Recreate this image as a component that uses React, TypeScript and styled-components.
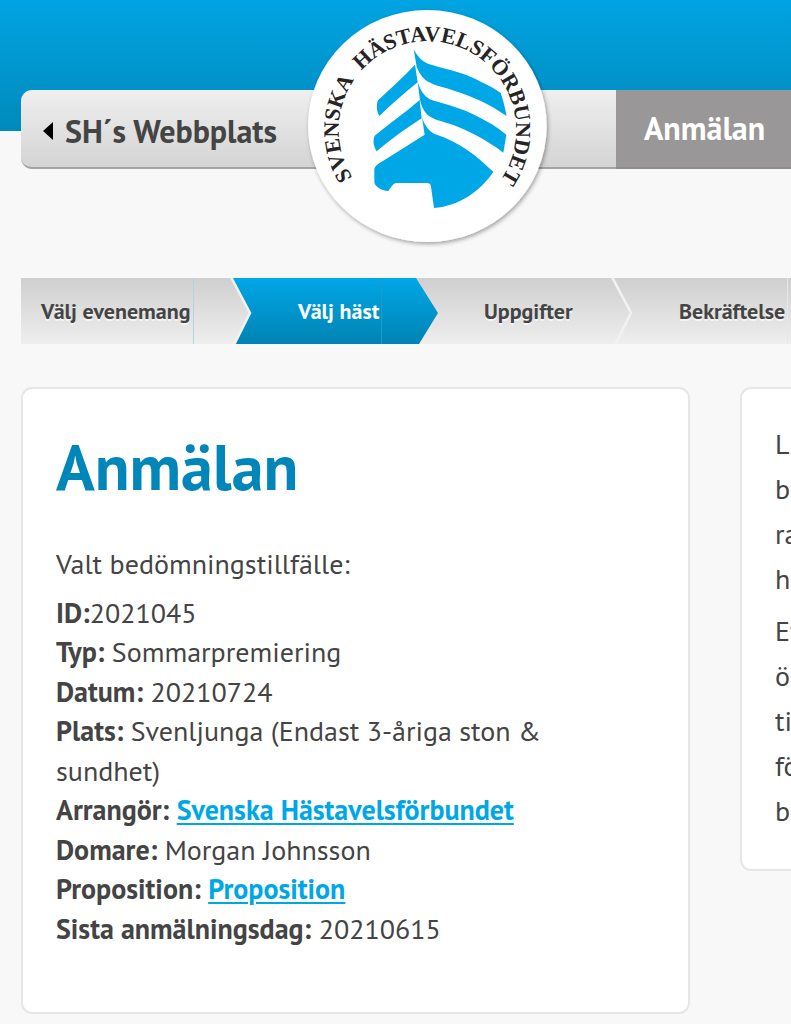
import React from "react";
import styled, { createGlobalStyle } from "styled-components";

const GlobalStyle = createGlobalStyle`
  *, *::before, *::after { box-sizing: border-box; }
  body {
    margin: 0;
    background: #f8f8f8;
    color: #444;
    font-family: "PT Sans", Lato, sans-serif;
    font-size: 28px;
  }
`;

const Page = styled.div`
  min-height: 100vh;
  padding-bottom: 10px;
  overflow-x: hidden;
`;

const Header = styled.header`
  padding: 90px 0 0 21px;
  background: linear-gradient(#00a4e2, #008abc) no-repeat top / 100% 131px;
`;

const NavBar = styled.nav`
  position: relative;
  display: flex;
  justify-content: space-between;
  height: 79px;
  border-bottom: 2px solid #a3a3a3;
  border-radius: 11px 0 0 11px;
  background: linear-gradient(#efefef, #d4d4d4);
  font-size: 32px;
  font-weight: 700;
`;

const BackLink = styled.a`
  display: flex;
  align-items: center;
  gap: 12px;
  padding: 5px 0 0 22px;
  color: #444;
  text-decoration: none;
`;

const BackArrow = styled.span`
  border: solid transparent;
  border-width: 9px 10px 9px 0;
  border-right-color: #000;
`;

const CurrentTab = styled.a`
  display: flex;
  align-items: center;
  flex: 0 0 175px;
  height: 79px;
  padding: 0 0 2px 28px;
  border-bottom: 2px solid #8f8d8d;
  background: #999797;
  color: #fff;
  text-decoration: none;
`;

const LogoLink = styled.a`
  position: absolute;
  top: -90px;
  left: 279px;
  line-height: 0;
`;

const Steps = styled.ol`
  display: flex;
  height: 66px;
  margin: 109px 0 43px 21px;
  padding: 0;
  list-style: none;
  font-size: 22px;
  font-weight: 700;
`;

const Step = styled.li<{ $share: number; $active?: boolean }>`
  position: relative;
  flex: ${(p) => p.$share} 1 0;
  min-width: 0;
  background: ${(p) =>
    p.$active
      ? "linear-gradient(#00a7e7, #0083b4)"
      : "linear-gradient(#cfcfcf, #eeeeee)"};
`;

const StepLink = styled.a<{ $indent: number; $active?: boolean; $line: string }>`
  display: inline-flex;
  align-items: center;
  height: 100%;
  padding-left: ${(p) => p.$indent}px;
  padding-right: 2px;
  border-right: 1px solid ${(p) => p.$line};
  color: ${(p) => (p.$active ? "#fff" : "#444")};
  text-decoration: none;
  text-shadow: ${(p) => (p.$active ? "none" : "0 2px 0 #f4f4f4")};
  white-space: nowrap;
`;

const TipSvg = styled.svg`
  position: absolute;
  z-index: 1;
  top: 0;
  left: calc(100% - 3px);
`;

const Columns = styled.main`
  display: grid;
  grid-template-columns: minmax(0, 1fr) 51px;
  align-items: start;
  gap: 50px;
  padding-left: 21px;
`;

const Card = styled.section`
  padding: 34px 33px 64px;
  border: 2px solid #e6e6e6;
  border-radius: 11px;
  background: #fff;
`;

const SideCard = styled.aside`
  padding: 32px 0 36px 33px;
  border: 2px solid #e6e6e6;
  border-right: 0;
  border-radius: 11px 0 0 11px;
  background: #fff;
  overflow: hidden;
  white-space: nowrap;
`;

const Title = styled.h1`
  margin: 0 0 30px;
  color: #0086b8;
  font-size: 64px;
  line-height: 88px;
`;

const Text = styled.p`
  margin: 0 0 7px;
  line-height: 45px;

  &:last-child { margin-bottom: 0; }
`;

const Details = styled.dl`
  margin: 0;
  line-height: 1.41;
`;

const Detail = styled.div`
  dt, dd { display: inline; margin: 0; }
  dt { font-weight: 700; }
`;

const TextLink = styled.a`
  color: #00a7e7;
  font-weight: 700;
  text-decoration: underline;
  text-decoration-thickness: 2px;
  text-underline-offset: 3px;
`;

function Tip({ active, outlined }: { active?: boolean; outlined?: boolean }) {
  const id = active ? "tip-active" : outlined ? "tip-outlined" : "tip";
  return (
    <TipSvg width="26" height="66" viewBox="0 0 26 66" aria-hidden="true">
      <defs>
        <linearGradient id={id} x1="0" y1="0" x2="0" y2="1">
          <stop offset="0" stopColor={active ? "#00a7e7" : "#cfcfcf"} />
          <stop offset="1" stopColor={active ? "#0083b4" : "#eeeeee"} />
        </linearGradient>
      </defs>
      <path d={active ? "M0 0H4L26 35 7 66H0z" : "M0 0H2L20 35 4 66H0z"} fill={`url(#${id})`} />
      {!active && <path d="M1 -1 20 35 4 67" fill="none" stroke="#f2f2f2" strokeWidth="2.5" />}
    </TipSvg>
  );
}

function Logo() {
  return (
    <svg width="260" height="260" viewBox="0 0 780 780" role="img" aria-label="Svenska Hästavelsförbundet">
      <defs>
        <filter id="logo-shadow" x="-10%" y="-10%" width="120%" height="120%">
          <feDropShadow dx="4" dy="6" stdDeviation="6" floodColor="#000" floodOpacity="0.35" />
        </filter>
        <path id="logo-ring" d="M158 533A266 266 0 1 1 570 578" />
      </defs>
      <ellipse cx="382" cy="378" rx="358" ry="348" fill="#fff" filter="url(#logo-shadow)" />
      <g fill="#262424" fontFamily="Liberation Serif, serif" fontWeight="700" fontSize="66">
        <text><textPath href="#logo-ring" startOffset="0">SVENSKA</textPath></text>
        <text><textPath href="#logo-ring" startOffset="345">HÄSTAVELSFÖRBUNDET</textPath></text>
      </g>
      <g fill="#00a7e7">
        <path d="M341 148C352 168 364 183 384 191C430 206 480 214 520 234C550 249 580 262 602 279C610 300 615 325 620 348C570 314 520 290 465 273C435 262 405 258 382 244C364 232 356 214 350 200Z" />
        <path d="M345 194C310 232 270 266 234 301C228 316 230 334 238 348C276 312 314 278 353 247Z" />
        <path d="M353 247C362 270 370 288 392 299C440 313 490 326 530 348C562 364 594 382 619 404L610 458C560 420 510 394 460 375C430 364 400 360 382 344C370 332 364 318 360 300Z" />
        <path d="M359 300C316 338 268 370 224 407C217 424 222 440 230 454C272 418 318 386 365 355Z" />
        <path d="M366 352C374 376 386 396 410 404C472 423 530 466 580 516C540 574 478 618 402 624L393 560C392 552 388 549 380 549H290C278 550 274 562 265 573C246 572 228 562 223 548V506C228 494 240 488 250 482L374 404Z" />
      </g>
    </svg>
  );
}

const leadLines = ["L", "b", "ra", "h"];
const followLines = ["Ef", "ö", "ti", "fö", "b"];

function Lines({ items }: { items: string[] }) {
  return (
    <Text>
      {items.map((line, i) => (
        <React.Fragment key={i}>
          {i > 0 && <br />}
          {line}
        </React.Fragment>
      ))}
    </Text>
  );
}

export default function App() {
  return (
    <Page>
      <GlobalStyle />
      <Header>
        <NavBar>
          <BackLink href="#webbplats">
            <BackArrow />
            SH´s Webbplats
          </BackLink>
          <LogoLink href="#start">
            <Logo />
          </LogoLink>
          <CurrentTab href="#anmalan">Anmälan</CurrentTab>
        </NavBar>
      </Header>

      <Steps>
        <Step $share={212}>
          <StepLink href="#evenemang" $indent={20} $line="#b4d3dc">Välj evenemang</StepLink>
          <Tip outlined />
        </Step>
        <Step $share={182} $active>
          <StepLink href="#hast" $active $indent={65} $line="#1c9ccb">Välj häst</StepLink>
          <Tip active />
        </Step>
        <Step $share={199}>
          <StepLink href="#uppgifter" $indent={69} $line="transparent">Uppgifter</StepLink>
          <Tip />
        </Step>
        <Step $share={177}>
          <StepLink href="#bekraftelse" $indent={65} $line="#e6e6e6">Bekräftelse</StepLink>
        </Step>
      </Steps>

      <Columns>
        <Card>
          <Title>Anmälan</Title>
          <Text>Valt bedömningstillfälle:</Text>
          <Details>
            <Detail><dt>ID:</dt><dd>2021045</dd></Detail>
            <Detail><dt>Typ:</dt> <dd>Sommarpremiering</dd></Detail>
            <Detail><dt>Datum:</dt> <dd>20210724</dd></Detail>
            <Detail><dt>Plats:</dt> <dd>Svenljunga (Endast 3-åriga ston &amp;<br />sundhet)</dd></Detail>
            <Detail><dt>Arrangör:</dt> <dd><TextLink href="#arrangor">Svenska Hästavelsförbundet</TextLink></dd></Detail>
            <Detail><dt>Domare:</dt> <dd>Morgan Johnsson</dd></Detail>
            <Detail><dt>Proposition:</dt> <dd><TextLink href="#proposition">Proposition</TextLink></dd></Detail>
            <Detail><dt>Sista anmälningsdag:</dt> <dd>20210615</dd></Detail>
          </Details>
        </Card>
        <SideCard>
          <Lines items={leadLines} />
          <Lines items={followLines} />
        </SideCard>
      </Columns>
    </Page>
  );
}
